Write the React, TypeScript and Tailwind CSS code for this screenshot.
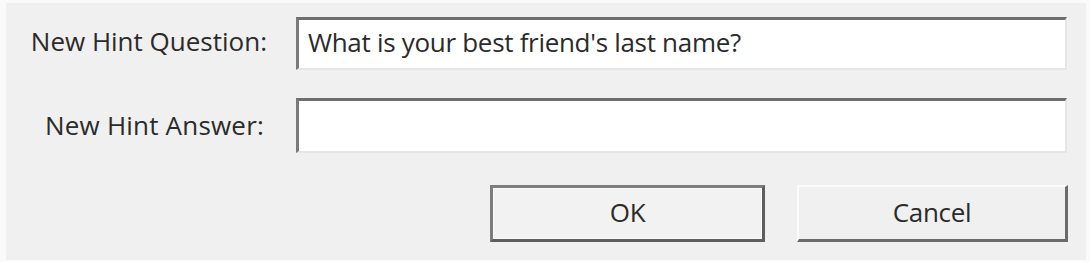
import React from "react";

export default function App() {
  const font = { fontFamily: '"Open Sans", "Noto Sans", sans-serif' };
  return (
    <div className="w-[1090px] h-[262px] bg-[#fafafa] pl-[6px] pt-[3px] pr-[4px] pb-[2px]" style={font}>
      <div className="h-full bg-[#f0f0f0] pt-[14px] pr-[19px] text-[#2b2b2b] text-[26px]">
        <div className="grid grid-cols-[261px_1fr] gap-x-[29px]">
          <div className="h-[53px] flex items-center justify-end pb-[4px]">New Hint Question:</div>
          <div className="h-[53px] bg-white border-t-[3px] border-l-[3px] border-t-[#6e6e6e] border-l-[#7a7a7a] border-r-2 border-b-2 border-r-[#e6e6e6] border-b-[#e6e6e6] flex items-center pl-[9px] pb-[4px] tracking-[-0.3px]">
            What is your best friend's last name?
          </div>
          <div className="h-[55px] mt-[28px] flex items-center justify-end pr-[3px] tracking-[0.2px]">New Hint Answer:</div>
          <div className="h-[55px] mt-[28px] bg-white border-t-[3px] border-l-[3px] border-t-[#6e6e6e] border-l-[#7a7a7a] border-r-2 border-b-2 border-r-[#e6e6e6] border-b-[#e6e6e6]"></div>
        </div>
        <div className="flex justify-end gap-[32px] mt-[32px] tracking-[-0.3px]">
          <div className="w-[275px] h-[57px] border-[3px] border-[#7d7d7d] border-b-[#5e5e5e] border-r-[#5e5e5e] bg-[#f2f2f2]">
            <div className="w-full h-full border border-[#fbfbfb] flex items-center justify-center pb-[2px]">OK</div>
          </div>
          <div className="w-[271px] h-[57px] border-t-2 border-l-2 border-t-[#fbfbfb] border-l-[#fbfbfb] border-r-[3px] border-b-[3px] border-r-[#6b6b6b] border-b-[#6b6b6b] bg-[#f0f0f0] flex items-center justify-center pb-[2px] mr-[-1px]">
            Cancel
          </div>
        </div>
      </div>
    </div>
  );
}
